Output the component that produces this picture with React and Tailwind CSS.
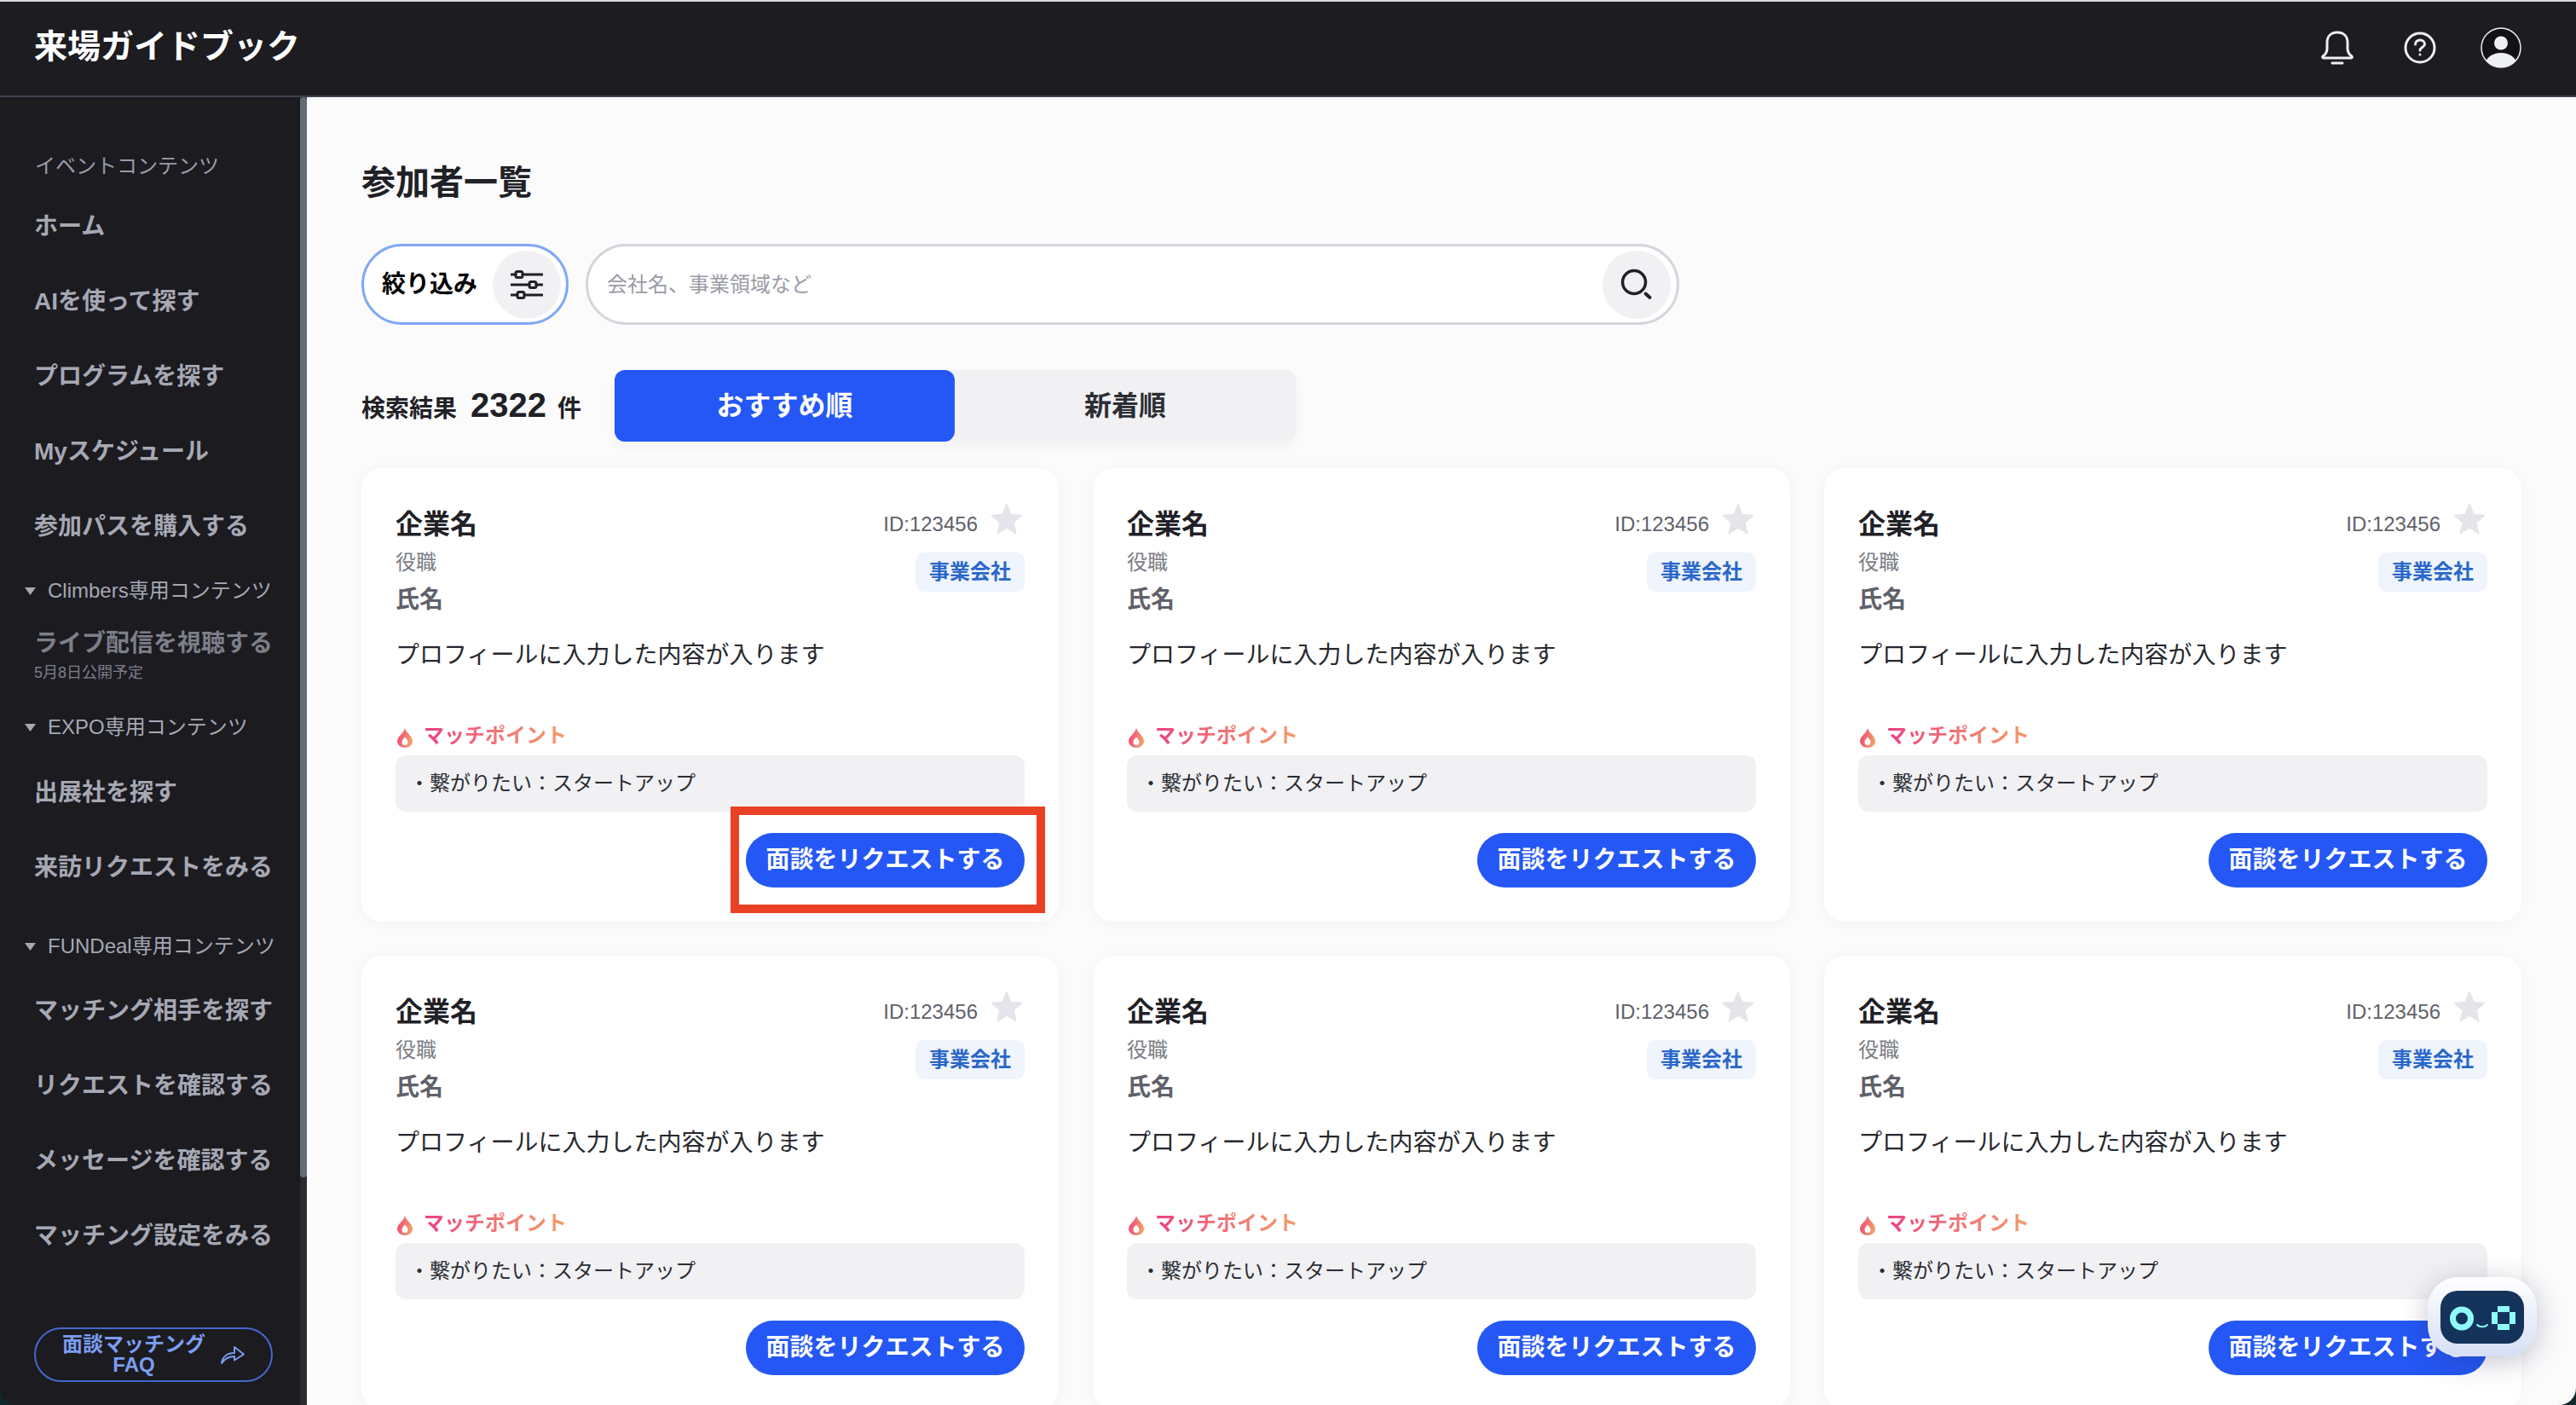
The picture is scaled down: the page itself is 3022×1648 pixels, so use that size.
const FONT = { fontFamily: '"Liberation Sans","Noto Sans CJK JP",sans-serif' };

function Item({ children, h = 'h-[88px]' }) {
  return <div className={`${h} flex items-center pl-[40px] text-[28px] font-bold text-[#a6a8b3] whitespace-nowrap`}>{children}</div>;
}

function Section({ children, h = 'h-[64px]' }) {
  return (
    <div className={`${h} flex items-center pl-[28px] text-[24px] text-[#a6a8b3] whitespace-nowrap`}>
      <svg width="15" height="11" viewBox="0 0 15 11" className="mr-[13px] shrink-0"><path d="M1 1h13L7.500 10z" fill="#a6a8b3" /></svg>
      {children}
    </div>
  );
}

function Sidebar() {
  return (
    <aside className="relative w-[360px] shrink-0 bg-[#1b1b20] flex rounded-bl-[20px] overflow-hidden">
      <div className="flex-1 flex flex-col min-w-0">
        <div className="h-[108px] pt-[64px] pl-[41px] text-[24px] leading-[34px] text-[#9a9ca8] whitespace-nowrap">イベントコンテンツ</div>
        <Item>ホーム</Item>
        <Item>AIを使って探す</Item>
        <Item>プログラムを探す</Item>
        <Item>Myスケジュール</Item>
        <Item>参加パスを購入する</Item>
        <Section h="h-[62px]">Climbers専用コンテンツ</Section>
        <div className="h-[96px] pl-[40px] pt-[12px] whitespace-nowrap">
          <div className="text-[28px] leading-[38px] font-bold text-[#7d7f88]">ライブ配信を視聴する</div>
          <div className="text-[18px] leading-[24px] mt-[3px] text-[#7d7f8a]">5月8日公開予定</div>
        </div>
        <Section h="h-[66px]">EXPO専用コンテンツ</Section>
        <Item>出展社を探す</Item>
        <Item>来訪リクエストをみる</Item>
        <Section h="h-[64px] mt-[16px]">FUNDeal専用コンテンツ</Section>
        <Item>マッチング相手を探す</Item>
        <Item>リクエストを確認する</Item>
        <Item>メッセージを確認する</Item>
        <Item>マッチング設定をみる</Item>
        <div className="mt-[63px] ml-[40px] w-[280px] h-[64px] rounded-full border-2 border-[#4468cf] flex items-center pl-[30px] text-[#7b9df2]">
          <div className="w-[170px] text-center text-[24px] leading-[24px] font-bold whitespace-nowrap">面談マッチング<br />FAQ</div>
          <svg width="30" height="24" viewBox="0 0 30 24" className="ml-[16px]" fill="none" stroke="#7b9df2" strokeWidth="2" strokeLinejoin="round">
            <path d="M2 22C3 14 9 10 17 10V3l11 8.500-11 7V14C11 14 6 16 2 22z" />
          </svg>
        </div>
      </div>
      <div className="w-[8px] shrink-0 bg-[#2a2a33]">
        <div className="h-[1267px] bg-[#646c75] rounded-full"></div>
      </div>
    </aside>
  );
}

function Flame() {
  return (
    <svg width="18" height="23" viewBox="0 0 18 23" className="shrink-0 mt-[4px] ml-[2px]">
      <defs>
        <linearGradient id="fl" x1="0" y1="0" x2="1" y2="0.3">
          <stop offset="0" stopColor="#ec3f7e" />
          <stop offset="1" stopColor="#f59b68" />
        </linearGradient>
      </defs>
      <path fillRule="evenodd" fill="url(#fl)" d="M9 0c1 3.500 3 5 5 7.500 2.500 3 4 5 4 8 0 4-4 7.500-9 7.500s-9-3.500-9-7.500c0-3 1.500-5 3.500-7C6 6 8 3.500 9 0zm0 10.500c-1.500 2-3.500 3.500-3.500 6 0 2 1.500 3.800 3.500 3.800s3.500-1.800 3.500-3.800c0-2.500-2-4-3.500-6z" />
    </svg>
  );
}

function Card() {
  return (
    <div className="relative bg-white rounded-[24px] shadow-[0_2px_16px_rgba(30,30,60,0.04)] h-[532px] px-[40px] pt-[42px] pb-[40px] flex flex-col">
      <div className="flex justify-between">
        <div>
          <div className="h-[48px] leading-[48px] text-[32px] font-bold text-[#1f2126]">企業名</div>
          <div className="h-[36px] leading-[36px] mt-[3px] text-[24px] text-[#7a7c85]">役職</div>
          <div className="h-[36px] leading-[36px] mt-[8px] text-[28px] font-bold text-[#5f616a]">氏名</div>
        </div>
        <div className="flex flex-col items-end">
          <div className="flex items-center h-[48px] mr-[2px]">
            <span className="text-[24px] text-[#5f616a]">ID:123456</span>
            <svg width="38" height="38" viewBox="0 0 24 24" className="ml-[15px] -mt-[12px]"><path d="M12 1l3 7.600 8 .6-6.100 5.200 1.900 8.100L12 18.200l-6.800 4.300 1.900-8.100L1 9.200l8-.6z" fill="#e4e4ea" stroke="#e4e4ea" strokeLinejoin="round" /></svg>
          </div>
          <div className="mt-[9px] h-[46px] w-[128px] rounded-[10px] bg-[#eff4fd] flex items-center justify-center text-[24px] font-bold text-[#2a67c9]">事業会社</div>
        </div>
      </div>
      <div className="h-[40px] leading-[40px] mt-[27px] text-[28px] text-[#26282d]">プロフィールに入力した内容が入ります</div>
      <div className="h-[32px] mt-[58px] flex items-center gap-[13px]">
        <Flame />
        <span className="text-[24px] font-bold bg-gradient-to-r from-[#ec3f7e] to-[#f59b68] bg-clip-text text-transparent">マッチポイント</span>
      </div>
      <div className="h-[66px] mt-[7px] rounded-[12px] bg-[#f1f1f4] flex items-center pl-[16px] text-[24px] text-[#2b2d33]">・繋がりたい：スタートアップ</div>
      <div className="mt-[25px] flex justify-end">
        <div className="h-[64px] w-[327px] rounded-full bg-[#2457f5] flex items-center justify-center text-[28px] font-bold text-white">面談をリクエストする</div>
      </div>
    </div>
  );
}

export default function App() {
  return (
    <div className="w-[3022px] h-[1648px] overflow-hidden relative bg-[#10282c]" style={FONT}>
      <div className="h-full flex flex-col rounded-b-[20px] overflow-hidden">
        <header className="h-[114px] shrink-0 bg-[#1c1c21] border-t-2 border-t-[#d9d9d9] border-b-2 border-b-[#3f4350] flex items-center justify-between pl-[40px] pr-[64px]">
          <div className="text-[39px] font-bold text-white leading-none -mt-[6px]">来場ガイドブック</div>
          <div className="flex items-center -mt-[2px]">
            <svg width="40" height="42" viewBox="0 0 40 42" fill="none" stroke="#eeeff2" strokeWidth="3" strokeLinecap="round" strokeLinejoin="round">
              <path d="M3 31c3-2 5-4 5-9v-7C8 7 13 3 20 3s12 4 12 12v7c0 5 2 7 5 9 1 1 0 2-1 2H4c-1 0-2-1-1-2z" />
              <path d="M14 39h12" />
            </svg>
            <svg width="38" height="38" viewBox="0 0 38 38" className="ml-[58px]" fill="none" stroke="#eeeff2" strokeWidth="3">
              <circle cx="19" cy="19" r="17" />
              <path d="M13.500 15c0-3 2.500-5 5.500-5s5.500 2 5.500 4.700c0 3.800-5.500 3.800-5.500 7.300" strokeLinecap="round" />
              <circle cx="19" cy="27" r="1.500" fill="#eeeff2" stroke="none" />
            </svg>
            <svg width="48" height="48" viewBox="0 0 48 48" className="ml-[52px]">
              <defs><clipPath id="av"><circle cx="24" cy="24" r="23" /></clipPath></defs>
              <circle cx="24" cy="24" r="23" fill="#121216" stroke="#eeeff2" strokeWidth="1.500" />
              <circle cx="24" cy="18.500" r="8" fill="#eeeff2" />
              <ellipse cx="24" cy="43" rx="18" ry="13" fill="#eeeff2" clipPath="url(#av)" />
            </svg>
          </div>
        </header>
        <div className="flex-1 flex min-h-0">
          <Sidebar />
          <main className="flex-1 bg-[#fbfbfc] pl-[64px] pr-[64px] overflow-hidden">
            <h1 className="mt-[74px] h-[52px] leading-[52px] text-[40px] font-bold text-[#1f2126]">参加者一覧</h1>
            <div className="mt-[46px] flex gap-[20px]">
              <div className="w-[243px] h-[95px] rounded-full border-[3px] border-[#80a8f5] bg-white flex items-center justify-between pl-[21px] pr-[6px]">
                <span className="text-[28px] font-bold text-black whitespace-nowrap">絞り込み</span>
                <div className="w-[80px] h-[80px] rounded-full bg-[#f1f1f4] flex items-center justify-center">
                  <svg width="38" height="34" viewBox="0 0 38 34" fill="none" stroke="#1f2126" strokeWidth="3">
                    <path d="M1 5h5M14 5h23M1 17h21M30 17h7M1 29h7M16 29h21" strokeLinecap="round" />
                    <rect x="6" y="1.500" width="8" height="7" rx="2" />
                    <rect x="22" y="13.500" width="8" height="7" rx="2" />
                    <rect x="8" y="25.500" width="8" height="7" rx="2" />
                  </svg>
                </div>
              </div>
              <div className="w-[1283px] h-[95px] rounded-full border-[3px] border-[#d5d5dd] bg-white flex items-center justify-between pl-[22px] pr-[7px]">
                <span className="text-[24px] text-[#9a9ca6]">会社名、事業領域など</span>
                <div className="w-[80px] h-[80px] rounded-full bg-[#f1f1f4] flex items-center justify-center">
                  <svg width="38" height="38" viewBox="0 0 38 38" fill="none" stroke="#1f2126" strokeLinecap="round">
                    <circle cx="16" cy="16" r="13.500" strokeWidth="3.500" />
                    <path d="M29.500 29.500l5 4.500" strokeWidth="4" />
                  </svg>
                </div>
              </div>
            </div>
            <div className="mt-[53px] flex items-center h-[84px]">
              <div className="w-[297px] -mt-[3px] flex items-baseline text-[#1f2126] whitespace-nowrap">
                <span className="text-[28px] font-bold">検索結果</span>
                <span className="text-[40px] font-bold ml-[16px]">2322</span>
                <span className="text-[28px] font-bold ml-[13px]">件</span>
              </div>
              <div className="flex w-[799px] h-[84px] bg-[#f1f1f4] rounded-[12px] shadow-[0_6px_16px_rgba(30,30,60,0.04)]">
                <div className="w-[399px] rounded-[12px] bg-[#2457f5] flex items-center justify-center text-[32px] font-bold text-white">おすすめ順</div>
                <div className="flex-1 flex items-center justify-center text-[32px] font-bold text-[#2b2d33]">新着順</div>
              </div>
            </div>
            <div className="mt-[31px] grid grid-cols-3 gap-[40px]">
              {[0, 1, 2, 3, 4, 5].map((i) => <Card key={i} />)}
            </div>
          </main>
        </div>
      </div>
      <div className="absolute left-[857px] top-[946px] w-[369px] h-[125px] border-[10px] border-[#ea4125]"></div>
      <div className="absolute left-[2848px] top-[1498px] w-[128px] h-[93px] rounded-[36px] bg-gradient-to-b from-[#ffffff] to-[#d5dff5] shadow-[0_6px_32px_rgba(40,40,80,0.28)] flex items-center justify-center">
        <svg width="98" height="62" viewBox="0 0 98 62">
          <rect width="98" height="62" rx="20" fill="#14335a" />
          <circle cx="25" cy="32.500" r="10.500" fill="none" stroke="#8ffcfb" strokeWidth="7" />
          <path d="M43 40c3 3 9 3 12 0" fill="none" stroke="#8ffcfb" strokeWidth="2" strokeLinecap="round" />
          <path fillRule="evenodd" d="M67 18h14v7h7v14h-7v7H67v-7h-7V25h7zM67 25v14h14V25z" fill="#8ffcfb" />
        </svg>
      </div>
    </div>
  );
}
